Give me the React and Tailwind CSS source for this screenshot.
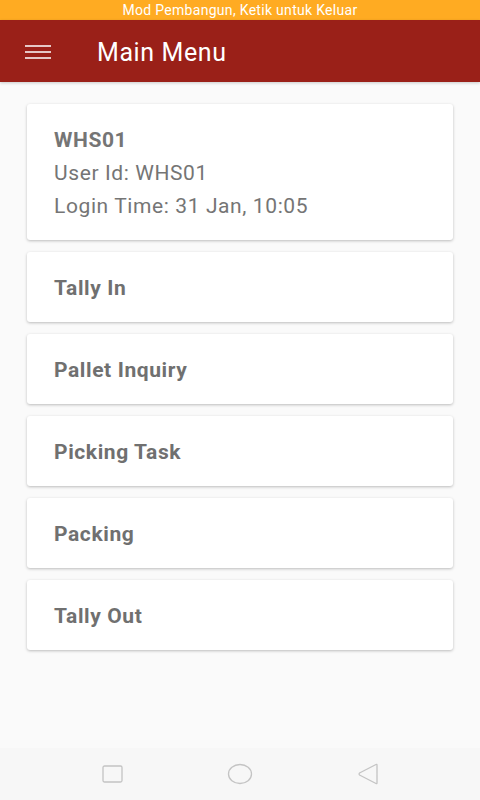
import React from "react";

const menuItems = ["Tally In", "Pallet Inquiry", "Picking Task", "Packing", "Tally Out"];

const Card = ({ children, className = "" }) => (
  <div
    className={`bg-white rounded-[3px] shadow-[0_1px_3px_rgba(0,0,0,0.25)] px-[27px] ${className}`}
  >
    {children}
  </div>
);

export default function App() {
  return (
    <div
      className="w-[480px] h-[800px] flex flex-col bg-[#fafafa] overflow-hidden"
      style={{ fontFamily: "Roboto, 'Noto Sans', sans-serif" }}
    >
      {/* Status bar */}
      <div className="h-[20px] bg-[#ffab22] flex items-center justify-center text-white text-[14px] tracking-[0.3px] leading-none">
        Mod Pembangun, Ketik untuk Keluar
      </div>

      {/* App bar */}
      <div className="h-[62px] bg-[#9a2018] flex items-center text-white shadow-[0_1px_3px_rgba(0,0,0,0.2)]">
        <div className="w-[97px] pl-[25px] flex items-center pt-[1px]">
          <svg width="26" height="14" viewBox="0 0 26 14">
            <rect x="0" y="0.25" width="26" height="1.5" fill="#fff" />
            <rect x="0" y="6.25" width="26" height="1.5" fill="#fff" />
            <rect x="0" y="12.25" width="26" height="1.5" fill="#fff" />
          </svg>
        </div>
        <span className="text-[25px] tracking-[0.6px] pt-[3px]">Main Menu</span>
      </div>

      {/* Content */}
      <div className="flex-1 flex flex-col gap-[12px] px-[27px] pt-[22px]">
        <Card className="h-[136px] flex flex-col justify-center pt-[3px] text-[#757575] text-[21px] tracking-[0.6px]">
          <div className="font-bold leading-[33px]">WHS01</div>
          <div className="leading-[33px]">User Id: WHS01</div>
          <div className="leading-[33px]">Login Time: 31 Jan, 10:05</div>
        </Card>
        {menuItems.map((item) => (
          <Card key={item} className="h-[70px] flex items-center">
            <span className="font-bold text-[21px] tracking-[0.6px] text-[#707070] pt-[3px]">{item}</span>
          </Card>
        ))}
      </div>

      {/* Nav bar */}
      <div className="h-[52px] bg-[#f7f7f7] flex items-center justify-center">
        <div className="flex items-center justify-between w-[277px]">
          <svg width="21" height="18" viewBox="0 0 21 18">
            <rect x="1" y="1" width="19" height="16" rx="1.5" fill="none" stroke="#c4c4c4" strokeWidth="1.3" />
          </svg>
          <svg width="26" height="22" viewBox="0 0 26 22">
            <ellipse cx="13" cy="11" rx="11.5" ry="9.5" fill="none" stroke="#c4c4c4" strokeWidth="1.3" />
          </svg>
          <svg width="22" height="22" viewBox="0 0 22 22">
            <path d="M20 2 L20 20 Q20 21 19 20.5 L2.5 12 Q1.5 11 2.5 10 L19 1.5 Q20 1 20 2 Z" fill="none" stroke="#c4c4c4" strokeWidth="1.3" strokeLinejoin="round" />
          </svg>
        </div>
      </div>
    </div>
  );
}
